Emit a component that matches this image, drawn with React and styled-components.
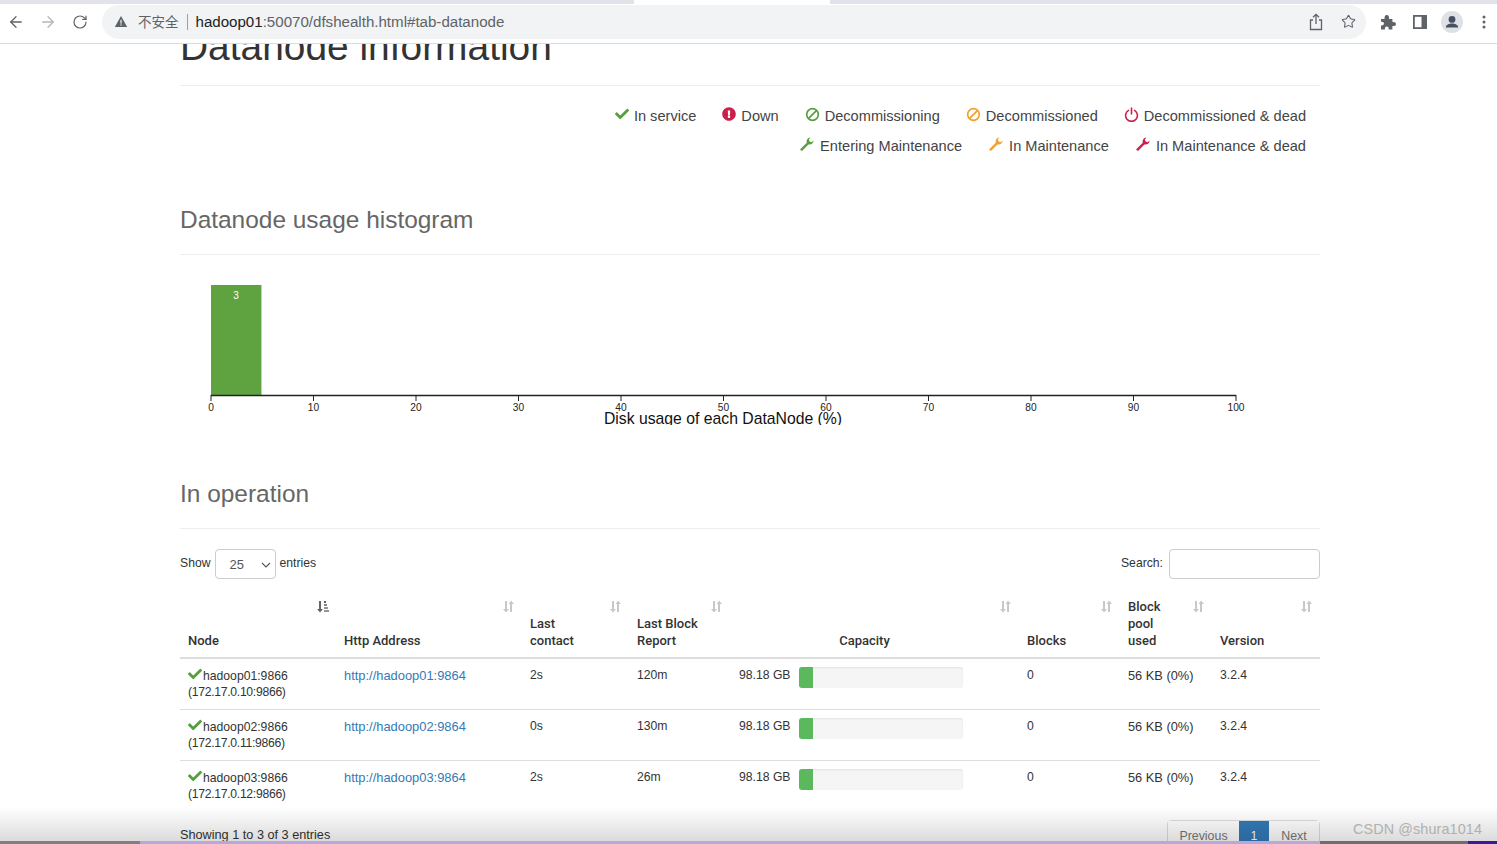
import React from 'react';
import styled, { createGlobalStyle } from 'styled-components';
import { ArrowLeft, ArrowRight, RotateCw, Star } from 'lucide-react';
import { FaCheck, FaExclamationCircle } from 'react-icons/fa';

const GREEN = '#55a03c';
const ORANGE = '#f0a030';
const RED = '#cc1f4a';

const GlobalStyle = createGlobalStyle`
  html, body {
    margin: 0;
    padding: 0;
    background: #fff;
    overflow: hidden;
  }
  * { box-sizing: border-box; }
`;

const Screen = styled.div`
  width: 1497px;
  height: 844px;
  display: flex;
  flex-direction: column;
  overflow: hidden;
  position: relative;
  font-family: "Liberation Sans", Arial, sans-serif;
  color: #333;
`;

const TabStrip = styled.div`
  height: 4px;
  display: flex;
  background: #fff;
`;

const TabEdge = styled.div`
  width: ${p => p.$w}px;
  background: #e2e2ea;
`;

const TabGap = styled.div`
  flex: 1;
  background: #fff;
`;

const Toolbar = styled.div`
  height: 40px;
  display: flex;
  align-items: center;
  background: #fff;
  border-bottom: 1px solid #dcdcdc;
  padding: 0 0 4px 0;
  flex: none;
`;

const NavButton = styled.div`
  width: 32px;
  height: 32px;
  display: flex;
  align-items: center;
  justify-content: center;
  flex: none;
  color: ${p => (p.$off ? '#b4b6b8' : '#5f6368')};
`;

const NavGroup = styled.div`
  display: flex;
  padding-right: 6px;
`;

const UrlPill = styled.div`
  width: 1264px;
  height: 34px;
  border-radius: 17px;
  background: #f1f3f4;
  display: flex;
  align-items: center;
  padding: 0 2px 0 12px;
  flex: none;
`;

const InsecureText = styled.span`
  font-family: "Liberation Sans", "Noto Sans CJK SC", sans-serif;
  font-size: 13.5px;
  line-height: 16px;
  height: 16px;
  margin-top: 2px;
  color: #5f6368;
  margin-left: 10px;
`;

const UrlDivider = styled.span`
  width: 1px;
  height: 16px;
  background: #9aa0a6;
  margin: 0 8px 0 8px;
`;

const UrlText = styled.span`
  font-size: 15.1px;
  color: #5f6368;
  flex: 1;
  strong {
    font-weight: 400;
    color: #202124;
  }
`;

const ToolIcons = styled.div`
  display: flex;
  padding-left: 6px;
`;

const Page = styled.div`
  flex: 1;
  min-height: 0;
  overflow: hidden;
  position: relative;
  background: #fff;
`;

const Container = styled.div`
  width: 1140px;
  margin-left: 180px;
  font-size: 12.2px;
  line-height: 17px;
`;

const TitleClip = styled.div`
  height: 42px;
  display: flex;
  align-items: flex-end;
  border-bottom: 1px solid #eee;
  padding-bottom: 17px;
  overflow: hidden;
`;

const Title = styled.h1`
  margin: 0;
  font-size: 38.9px;
  line-height: 42px;
  font-weight: 400;
  white-space: nowrap;
  color: #333;
`;

const Legend = styled.div`
  padding: 15px 14px 0 0;
  display: flex;
  flex-direction: column;
  align-items: flex-end;
`;

const LegendRow = styled.div`
  height: 30px;
  display: flex;
  align-items: center;
  gap: 26px;
`;

const LegendItem = styled.span`
  display: flex;
  align-items: center;
  gap: 5px;
  font-size: 14.6px;
  color: #444;
  svg {
    color: ${p => p.$color};
    font-size: 14px;
    margin-top: -4px;
  }
`;

const SectionHead = styled.h2`
  margin: ${p => p.$top}px 0 0;
  padding-bottom: 19px;
  border-bottom: 1px solid #eee;
  font-size: 24.45px;
  line-height: 30px;
  font-weight: 400;
  color: #666;
`;

const ChartBox = styled.div`
  height: 170px;
`;

const Controls = styled.div`
  margin-top: 20px;
  height: 30px;
  display: flex;
  align-items: center;
  justify-content: space-between;
`;

const ControlLabel = styled.label`
  display: flex;
  align-items: center;
  gap: 4px;
  margin-top: -2px;
`;

const SelectBox = styled.div`
  position: relative;
  width: 61px;
  height: 30px;
  border: 1px solid #ccc;
  border-radius: 4px;
  padding: 6px 0 0 14px;
  font-size: 13px;
  margin-top: 2px;
  color: #555;
  svg {
    position: absolute;
    right: 4px;
    top: 12px;
  }
`;

const SearchInput = styled.input`
  width: 151px;
  height: 30px;
  border: 1px solid #ccc;
  border-radius: 4px;
  margin: 2px 0 0 2px;
  background: #fff;
  outline: none;
`;

const Table = styled.table`
  width: 1140px;
  margin-top: 11px;
  border-collapse: collapse;
  table-layout: fixed;
`;

const Th = styled.th`
  position: relative;
  padding: 8px ${p => p.$right || 8}px 8px 8px;
  text-align: ${p => p.$align || 'left'};
  vertical-align: bottom;
  font-family: Roboto, "Liberation Sans", sans-serif;
  font-size: 13px;
  font-weight: 500;
  color: #333;
  border-bottom: 2px solid #ddd;
`;

const SortMark = styled.span`
  position: absolute;
  top: 10px;
  right: 7px;
  display: flex;
  color: ${p => (p.$active ? '#666' : '#c8c8c8')};
`;

const Td = styled.td`
  padding: 8px;
  vertical-align: top;
  border-bottom: ${p => (p.$last ? 'none' : '1px solid #ddd')};
  color: #333;
`;

const CellLine = styled.div`
  height: 17px;
  white-space: nowrap;
`;

const NodeCheck = styled(FaCheck)`
  color: ${GREEN};
  font-size: 14px;
  vertical-align: -1.5px;
  margin-right: 1px;
`;

const NodeIp = styled(CellLine)`
  letter-spacing: -0.3px;
`;

const HostLink = styled.a`
  display: block;
  height: 17px;
  font-size: 12.9px;
  color: #337ab7;
  text-decoration: none;
`;

const PoolText = styled(CellLine)`
  font-size: 12.8px;
`;

const CapacityWrap = styled.div`
  display: flex;
  align-items: flex-start;
  margin-left: 1px;
  gap: 8px;
`;

const ProgressTrack = styled.div`
  width: 164px;
  height: 21px;
  border-radius: 3px;
  background: #f5f5f5;
  box-shadow: inset 0 1px 2px rgba(0, 0, 0, 0.08);
  overflow: hidden;
`;

const ProgressFill = styled.div`
  height: 100%;
  background: #5cb85c;
`;

const Footer = styled.div`
  margin-top: 9px;
  display: flex;
  justify-content: space-between;
  align-items: flex-start;
`;

const FooterInfo = styled.div`
  padding-top: 7px;
  font-size: 12.7px;
`;

const Pager = styled.div`
  display: flex;
  height: 30px;
  border: 1px solid #ddd;
  border-radius: 4px;
  color: #777;
  width: 153px;
`;

const PageItem = styled.div`
  width: ${p => p.$w}px;
  text-align: center;
  padding-top: 7px;
  font-size: 12.4px;
  background: ${p => (p.$active ? '#337ab7' : '#fff')};
  color: ${p => (p.$active ? '#fff' : '#777')};
`;

const EdgeShade = styled.div`
  position: absolute;
  left: 0;
  right: 0;
  bottom: 0;
  height: 34px;
  background: linear-gradient(to bottom, rgba(0, 0, 0, 0), rgba(0, 0, 0, 0.14));
  pointer-events: none;
`;

const Watermark = styled.div`
  position: absolute;
  right: 15px;
  bottom: 3px;
  font-size: 14.4px;
  line-height: 18px;
  letter-spacing: 0.1px;
  color: #b0b0b0;
`;

const BottomStrip = styled.div`
  height: 3px;
  display: flex;
  flex: none;
`;

const StripPart = styled.div`
  width: ${p => (p.$w ? `${p.$w}px` : 'auto')};
  flex: ${p => (p.$w ? 'none' : 1)};
  background: ${p => p.$bg};
`;

const WarnIcon = () => (
  <svg width="14" height="13" viewBox="0 0 14 13">
    <path d="M7 1 L13.2 12 H0.8 Z" fill="#5f6368" />
    <rect x="6.4" y="4.8" width="1.2" height="3.8" fill="#f1f3f4" />
    <rect x="6.4" y="9.4" width="1.2" height="1.2" fill="#f1f3f4" />
  </svg>
);

const ShareIcon = () => (
  <svg width="16" height="18" viewBox="0 0 16 18" fill="none" stroke="#5f6368" strokeWidth="1.3">
    <path d="M5 7 H2.5 V16.5 H13.5 V7 H11" />
    <path d="M8 11 V1.5 M5 4.2 L8 1.3 L11 4.2" />
  </svg>
);

const PuzzleIcon = () => (
  <svg width="16" height="16" viewBox="0 0 16 16" fill="#5f6368">
    <path d="M1 5 H4.6 C4.2 2.8 5 1 6.8 1 C8.6 1 9.4 2.8 9 5 H12.4 V8 C14.4 7.6 16 8.4 16 10 C16 11.6 14.4 12.4 12.4 12 V15.5 H8.6 C9 13.6 8.2 12.6 6.8 12.6 C5.4 12.6 4.6 13.6 5 15.5 H1 V11.5 C2.8 11.9 3.9 11 3.9 9.6 C3.9 8.2 2.8 7.4 1 7.8 Z" />
  </svg>
);

const PanelIcon = () => (
  <svg width="14" height="14" viewBox="0 0 14 14">
    <rect x="0.9" y="0.9" width="12.2" height="12.2" fill="#fff" stroke="#5f6368" strokeWidth="1.8" />
    <rect x="8.5" y="1" width="5" height="12" fill="#5f6368" />
  </svg>
);

const AvatarIcon = () => (
  <svg width="22" height="22" viewBox="0 0 22 22">
    <circle cx="11" cy="11" r="11" fill="#dee1e6" />
    <circle cx="11" cy="8.4" r="3.4" fill="#474f63" />
    <path d="M4.8 16.6 C5 13.6 8 12.6 11 12.6 C14 12.6 17 13.6 17.2 16.6 Z" fill="#474f63" />
  </svg>
);

const DotsIcon = () => (
  <svg width="4" height="14" viewBox="0 0 4 14" fill="#5f6368">
    <circle cx="2" cy="2" r="1.5" />
    <circle cx="2" cy="7" r="1.5" />
    <circle cx="2" cy="12" r="1.5" />
  </svg>
);

const BanIcon = () => (
  <svg width="15" height="15" viewBox="0 0 16 16" fill="none" stroke="currentColor" strokeWidth="1.8">
    <circle cx="8" cy="8" r="6.2" />
    <path d="M3.8 12.2 L12.2 3.8" />
  </svg>
);

const PowerIcon = () => (
  <svg width="15" height="15" viewBox="0 0 16 16" fill="none" stroke="currentColor" strokeWidth="1.7" strokeLinecap="round">
    <path d="M4.8 3.6 A6.3 6.3 0 1 0 11.2 3.6" />
    <path d="M8 1 V7.4" />
  </svg>
);

const WrenchIcon = () => (
  <svg width="16" height="16" viewBox="0 0 16 16" fill="currentColor">
    <path d="M1 13.5 L7.8 6.7 C7.2 4 8.6 1.6 11.6 1.4 L9.8 3.6 L10.6 5.6 L12.6 6.2 L14.6 4.4 C14.5 7.4 12 9 9.4 8.4 L3 15 Z" />
  </svg>
);

const SortIcon = () => (
  <svg width="13" height="13" viewBox="0 0 13 13" fill="currentColor">
    <path d="M3 1 H5 V9 H7 L4 12.5 L1 9 H3 Z" />
    <path d="M8 12 H10 V4 H12 L9 0.5 L6.6 4 H8 Z" />
  </svg>
);

const SortedIcon = () => (
  <svg width="13" height="13" viewBox="0 0 13 13" fill="currentColor">
    <path d="M3 1 H5 V9 H7 L4 12.5 L1 9 H3 Z" />
    <rect x="8" y="1" width="2" height="2" />
    <rect x="8" y="4" width="3" height="2" opacity="0.8" />
    <rect x="8" y="7" width="4" height="2" opacity="0.7" />
    <rect x="8" y="10" width="5" height="2" opacity="0.7" />
  </svg>
);

const ticks = [0, 10, 20, 30, 40, 50, 60, 70, 80, 90, 100];

const Histogram = () => (
  <svg width="1140" height="170" viewBox="0 0 1140 170" fontFamily="Liberation Sans, Arial, sans-serif">
    <rect x="31" y="30" width="50" height="110" fill="#5fa340" />
    <rect x="81" y="30" width="1" height="110" fill="#b9d8aa" />
    <text x="56" y="44" textAnchor="middle" fontSize="10" fill="#fff">3</text>
    <path d="M31 140.5 H1056" stroke="#222" strokeWidth="1.5" fill="none" />
    {ticks.map(t => (
      <g key={t}>
        <path d={`M${31 + t * 10.25} 140 V146`} stroke="#222" strokeWidth="1" />
        <text x={31 + t * 10.25} y="156" textAnchor="middle" fontSize="10.2" fill="#222">{t}</text>
      </g>
    ))}
    <text x="543" y="169" textAnchor="middle" fontSize="15.75" fill="#111">Disk usage of each DataNode (%)</text>
  </svg>
);

const columns = [
  { w: 156, label: 'Node', sorted: true },
  { w: 186, label: 'Http Address' },
  { w: 107, label: <>Last<br />contact</> },
  { w: 101, label: <>Last Block<br />Report</> },
  { w: 289, label: 'Capacity', align: 'center', right: 28 },
  { w: 101, label: 'Blocks' },
  { w: 92, label: <>Block<br />pool<br />used</> },
  { w: 108, label: 'Version' },
];

const rows = [
  { host: 'hadoop01', ip: '172.17.0.10', contact: '2s', report: '120m' },
  { host: 'hadoop02', ip: '172.17.0.11', contact: '0s', report: '130m' },
  { host: 'hadoop03', ip: '172.17.0.12', contact: '2s', report: '26m' },
];

const App = () => (
  <Screen>
    <GlobalStyle />
    <TabStrip>
      <TabEdge $w={634} />
      <TabGap />
      <TabEdge $w={667} />
    </TabStrip>
    <Toolbar>
      <NavGroup>
        <NavButton><ArrowLeft size={18} strokeWidth={1.7} /></NavButton>
        <NavButton $off><ArrowRight size={18} strokeWidth={1.7} /></NavButton>
        <NavButton><RotateCw size={16} strokeWidth={1.8} /></NavButton>
      </NavGroup>
      <UrlPill>
        <WarnIcon />
        <InsecureText>不安全</InsecureText>
        <UrlDivider />
        <UrlText><strong>hadoop01</strong>:50070/dfshealth.html#tab-datanode</UrlText>
        <NavButton><ShareIcon /></NavButton>
        <NavButton><Star size={15} strokeWidth={1.7} /></NavButton>
      </UrlPill>
      <ToolIcons>
        <NavButton><PuzzleIcon /></NavButton>
        <NavButton><PanelIcon /></NavButton>
        <NavButton><AvatarIcon /></NavButton>
        <NavButton><DotsIcon /></NavButton>
      </ToolIcons>
    </Toolbar>
    <Page>
      <Container>
        <TitleClip><Title>Datanode information</Title></TitleClip>
        <Legend>
          <LegendRow>
            <LegendItem $color={GREEN}><FaCheck />In service</LegendItem>
            <LegendItem $color={RED}><FaExclamationCircle />Down</LegendItem>
            <LegendItem $color={GREEN}><BanIcon />Decommissioning</LegendItem>
            <LegendItem $color={ORANGE}><BanIcon />Decommissioned</LegendItem>
            <LegendItem $color={RED}><PowerIcon />Decommissioned &amp; dead</LegendItem>
          </LegendRow>
          <LegendRow>
            <LegendItem $color={GREEN}><WrenchIcon />Entering Maintenance</LegendItem>
            <LegendItem $color={ORANGE}><WrenchIcon />In Maintenance</LegendItem>
            <LegendItem $color={RED}><WrenchIcon />In Maintenance &amp; dead</LegendItem>
          </LegendRow>
        </Legend>
        <SectionHead $top={44}>Datanode usage histogram</SectionHead>
        <ChartBox><Histogram /></ChartBox>
        <SectionHead $top={54}>In operation</SectionHead>
        <Controls>
          <ControlLabel>
            Show
            <SelectBox>
              25
              <svg width="10" height="6" viewBox="0 0 10 6" fill="none" stroke="#555" strokeWidth="1.1">
                <path d="M1 1 L5 5 L9 1" />
              </svg>
            </SelectBox>
            entries
          </ControlLabel>
          <ControlLabel>
            Search:
            <SearchInput />
          </ControlLabel>
        </Controls>
        <Table>
          <colgroup>
            {columns.map((c, i) => <col key={i} width={c.w} />)}
          </colgroup>
          <thead>
            <tr>
              {columns.map((c, i) => (
                <Th key={i} $align={c.align} $right={c.right}>
                  {c.label}
                  <SortMark $active={c.sorted}>{c.sorted ? <SortedIcon /> : <SortIcon />}</SortMark>
                </Th>
              ))}
            </tr>
          </thead>
          <tbody>
            {rows.map((r, i) => {
              const last = i === rows.length - 1;
              return (
                <tr key={r.host}>
                  <Td $last={last}>
                    <CellLine><NodeCheck />{r.host}:9866</CellLine>
                    <NodeIp>({r.ip}:9866)</NodeIp>
                  </Td>
                  <Td $last={last}><HostLink href="#">http://{r.host}:9864</HostLink></Td>
                  <Td $last={last}>{r.contact}</Td>
                  <Td $last={last}>{r.report}</Td>
                  <Td $last={last}>
                    <CapacityWrap>
                      98.18 GB
                      <ProgressTrack><ProgressFill style={{ width: '9%' }} /></ProgressTrack>
                    </CapacityWrap>
                  </Td>
                  <Td $last={last}>0</Td>
                  <Td $last={last}><PoolText>56 KB (0%)</PoolText></Td>
                  <Td $last={last}>3.2.4</Td>
                </tr>
              );
            })}
          </tbody>
        </Table>
        <Footer>
          <FooterInfo>Showing 1 to 3 of 3 entries</FooterInfo>
          <Pager>
            <PageItem $w={71}>Previous</PageItem>
            <PageItem $w={30} $active>1</PageItem>
            <PageItem $w={50}>Next</PageItem>
          </Pager>
        </Footer>
      </Container>
      <EdgeShade />
      <Watermark>CSDN @shura1014</Watermark>
    </Page>
    <BottomStrip>
      <StripPart $w={140} $bg="#808080" />
      <StripPart $bg="#b8a8d8" />
      <StripPart $w={148} $bg="#6e6e6e" />
      <StripPart $w={29} $bg="#3a1a96" />
    </BottomStrip>
  </Screen>
);

export default App;
